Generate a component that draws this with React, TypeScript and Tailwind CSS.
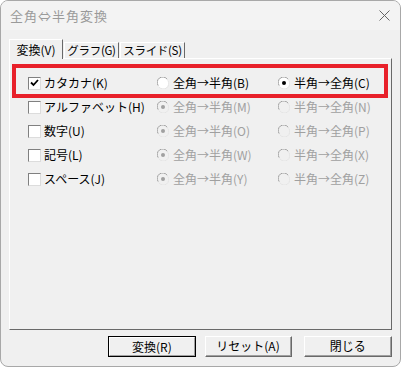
import React from "react";

const font = { fontFamily: '"Noto Sans CJK JP", "Noto Sans", sans-serif' };

function Checkbox({ checked }: { checked?: boolean }) {
  return (
    <div className="w-[13px] h-[13px] bg-white border-t border-l border-t-[#808080] border-l-[#808080] border-b border-r border-b-[#dcdcdc] border-r-[#dcdcdc] flex items-center justify-center shrink-0">
      {checked && (
        <svg width="9" height="8" viewBox="0 0 9 8">
          <path d="M1 3.5 L3.5 6 L8 1" stroke="#000" strokeWidth="1.8" fill="none" />
        </svg>
      )}
    </div>
  );
}

function Radio({ checked, disabled }: { checked?: boolean; disabled?: boolean }) {
  return (
    <svg width="12" height="12" viewBox="0 0 12 12" className="shrink-0">
      <circle cx="6" cy="6" r="5.5" fill={disabled ? "#f0f0f0" : "#fff"} />
      <path d="M10.2 2.3 A5.3 5.3 0 0 0 1.2 8.6" stroke="#a0a0a0" strokeWidth="1" fill="none" />
      <path d="M1.8 9.7 A5.3 5.3 0 0 0 10.8 3.4" stroke="#e4e4e4" strokeWidth="1" fill="none" />
      {checked && <circle cx="6" cy="6" r="2" fill={disabled ? "#a0a0a0" : "#000"} />}
    </svg>
  );
}

function Row({
  label,
  checked,
  disabled,
  a,
  b,
}: {
  label: string;
  checked?: boolean;
  disabled?: boolean;
  a: string;
  b: string;
}) {
  const txt = disabled ? "text-[#a0a0a0]" : "text-black";
  return (
    <div className="grid grid-cols-[129px_121px_1fr] h-[24px] items-center">
      <div className="flex items-center gap-[3px]">
        <Checkbox checked={checked} />
        <span className="text-[12px] text-black leading-none whitespace-nowrap">{label}</span>
      </div>
      <div className="flex items-center gap-[4px]">
        <Radio checked={disabled} disabled={disabled} />
        <span className={`text-[12px] leading-none whitespace-nowrap ${txt}`}>{a}</span>
      </div>
      <div className="flex items-center gap-[4px]">
        <Radio checked={!disabled} disabled={disabled} />
        <span className={`text-[12px] leading-none whitespace-nowrap ${txt}`}>{b}</span>
      </div>
    </div>
  );
}

function Button({ label, def, className }: { label: string; def?: boolean; className?: string }) {
  return (
    <div
      className={`w-[88px] h-[21px] ${
        def ? "border border-black" : "border-t border-l border-t-white border-l-white border-b border-r border-b-[#696969] border-r-[#696969]"
      } ${className ?? ""}`}
    >
      <div
        className={`w-full h-full flex items-center justify-center text-[12px] text-black bg-[#f0f0f0] whitespace-nowrap ${
          def ? "border-t border-l border-t-white border-l-white border-b border-r border-b-[#a0a0a0] border-r-[#a0a0a0]" : "border-b border-r border-b-[#a0a0a0] border-r-[#a0a0a0]"
        }`}
      >
        {label}
      </div>
    </div>
  );
}

export default function App() {
  return (
    <div className="w-[401px] h-[367px] bg-white" style={font}>
      <div className="w-[401px] h-[367px] rounded-[8px] border border-[#a8a8a8] bg-[#f0f0f0] overflow-hidden flex flex-col">
        <div className="h-[29px] bg-[#f3f3f3] flex items-center justify-between pl-[9px] pr-[10px] shrink-0">
          <span className="text-[13px] text-[#9a9a9a] tracking-[1px] whitespace-nowrap">全角⇔半角変換</span>
          <svg width="11" height="11" viewBox="0 0 11 11">
            <path d="M0.5 0.5 L10.5 10.5 M10.5 0.5 L0.5 10.5" stroke="#666" strokeWidth="1" />
          </svg>
        </div>
        <div className="px-[8px] pt-[9px]">
          <div className="flex items-end h-[19px] relative z-10">
            <div className="h-[20px] w-[54px] bg-[#f0f0f0] border-t border-l border-t-white border-l-white border-r border-r-[#696969] flex items-center justify-center text-[12px] text-black -mb-[1px] whitespace-nowrap">
              変換(V)
            </div>
            <div className="h-[16px] w-[55px] ml-[1px] border-t border-l border-t-white border-l-white border-r border-r-[#696969] flex items-center justify-center text-[11.5px] text-black whitespace-nowrap tracking-[-0.3px]">
              グラフ(G)
            </div>
            <div className="h-[16px] w-[65px] ml-[1px] border-t border-l border-t-white border-l-white border-r border-r-[#696969] flex items-center justify-center text-[11.5px] text-black whitespace-nowrap tracking-[-0.3px]">
              スライド(S)
            </div>
          </div>
          <div className="relative h-[272px] border-t border-l border-t-white border-l-white border-r border-b border-r-[#696969] border-b-[#696969] pt-[12px] pl-[18px]">
            <Row label="カタカナ(K)" checked a="全角→半角(B)" b="半角→全角(C)" />
            <Row label="アルファベット(H)" disabled a="全角→半角(M)" b="半角→全角(N)" />
            <Row label="数字(U)" disabled a="全角→半角(O)" b="半角→全角(P)" />
            <Row label="記号(L)" disabled a="全角→半角(W)" b="半角→全角(X)" />
            <Row label="スペース(J)" disabled a="全角→半角(Y)" b="半角→全角(Z)" />
            <div className="absolute left-[2px] top-[5px] w-[376px] h-[34px] border-[4px] border-[#e8202a] pointer-events-none" />
          </div>
          <div className="flex mt-[6px]">
            <Button label="変換(R)" def className="ml-[99px]" />
            <Button label="リセット(A)" className="ml-[9px]" />
            <Button label="閉じる" className="ml-[12px]" />
          </div>
        </div>
      </div>
    </div>
  );
}
